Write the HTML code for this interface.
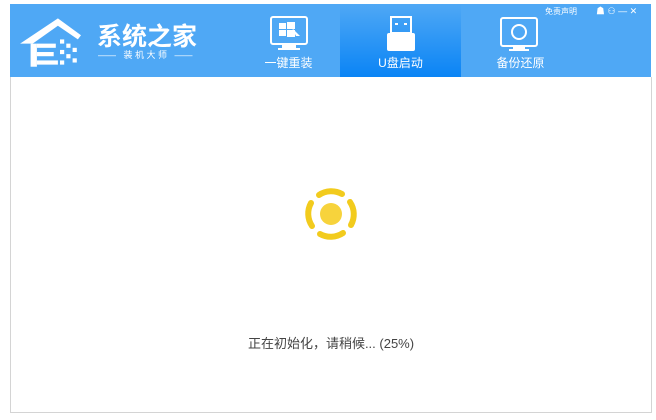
<!DOCTYPE html>
<html><head><meta charset="utf-8"><style>
body{margin:0;width:656px;height:420px;background:#fff;position:relative;overflow:hidden;font-family:"Liberation Sans","Noto Sans CJK SC",sans-serif}
.hdr{position:absolute;left:10px;top:4px;width:641px;height:73px;background:#4fa8f5}
.body{position:absolute;left:10px;top:77px;width:640px;height:335px;border:1px solid #d4d4d4;border-top:none;background:#fff}
.tab{position:absolute;top:0;height:73px;width:121px;color:#fff;font-size:12px;text-align:center}
.tab span{position:absolute;left:0;right:0;top:50px}
.act{background:linear-gradient(#4fa8f5,#0a84f5)}
.t{position:absolute;color:#fff}
</style></head><body>
<div class="hdr">
 <svg style="position:absolute;left:8px;top:8px" width="84" height="58" viewBox="0 0 80 55">
  <polygon points="2,30 38,6 60,22 57,26 38,13 14,30" fill="#fff"/>
  <rect x="12" y="30" width="6" height="22" fill="#fff"/>
  <rect x="18" y="30" width="18" height="4" fill="#fff"/><rect x="18" y="38" width="16" height="4" fill="#fff"/><rect x="18" y="46" width="20" height="4" fill="#fff"/>
  <rect x="40" y="26" width="4" height="4" fill="#fff"/><rect x="46" y="30" width="4" height="4" fill="#fff"/><rect x="40" y="36" width="4" height="4" fill="#fff"/><rect x="46" y="40" width="4" height="4" fill="#fff"/><rect x="52" y="34" width="4" height="4" fill="#fff"/><rect x="40" y="46" width="4" height="4" fill="#fff"/><rect x="52" y="44" width="4" height="4" fill="#fff"/>
 </svg>
 <div class="t" style="left:87px;top:13px;font-size:25px;font-weight:bold">系统之家</div>
 <div class="t" style="left:88px;top:44px;font-size:9px;white-space:nowrap">——&nbsp;&nbsp; 装 机 大 师 &nbsp;&nbsp;——</div>
 <div class="tab" style="left:218px">
  <svg style="position:absolute;left:42px;top:12px" width="38" height="36" viewBox="0 0 38 36"><rect x="1" y="1" width="36" height="27" rx="2" fill="none" stroke="#fff" stroke-width="2"/><rect x="12" y="28" width="14" height="4" fill="#fff"/><rect x="8" y="32" width="22" height="2" fill="#fff"/><rect x="9" y="7" width="7" height="6" fill="#fff"/><rect x="17" y="6" width="8" height="7" fill="#fff"/><rect x="9" y="14" width="7" height="6" fill="#fff"/><rect x="17" y="14" width="8" height="7" fill="#fff"/><path d="M22 12 L30 20 L26 20 Z" fill="#fff"/></svg>
  <span>一键重装</span></div>
 <div class="tab act" style="left:330px">
  <svg style="position:absolute;left:45px;top:12px" width="32" height="40" viewBox="0 0 32 40"><rect x="6" y="1" width="20" height="16" fill="none" stroke="#fff" stroke-width="2"/><rect x="10" y="7" width="3" height="2" fill="#fff"/><rect x="19" y="7" width="3" height="2" fill="#fff"/><rect x="2" y="17" width="28" height="18" rx="2" fill="#fff"/></svg>
  <span>U盘启动</span></div>
 <div class="tab" style="left:450px">
  <svg style="position:absolute;left:40px;top:13px" width="40" height="36" viewBox="0 0 40 36"><rect x="1" y="1" width="36" height="28" rx="2" fill="none" stroke="#fff" stroke-width="2"/><circle cx="19" cy="15" r="7" fill="none" stroke="#fff" stroke-width="2"/><rect x="13" y="29" width="12" height="3" fill="#fff"/><rect x="9" y="32" width="20" height="2" fill="#fff"/></svg>
  <span>备份还原</span></div>
 <div class="t" style="left:535px;top:2px;font-size:8px">免责声明</div>
 <div class="t" style="left:586px;top:0px;font-size:9px">☗ ⚇ — ✕</div>
</div>
<div class="body">
 <svg style="position:absolute;left:292px;top:109px" width="56" height="56" viewBox="0 0 56 56">
  <circle cx="28" cy="28" r="11" fill="#f7d33c"/>
  <g fill="none" stroke="#f2cb1d" stroke-width="6" stroke-linecap="round">
   <path d="M16 9 A22 22 0 0 1 39 8"/><path d="M47 16 A22 22 0 0 1 48 39"/><path d="M40 47 A22 22 0 0 1 17 48"/><path d="M9 40 A22 22 0 0 1 8 17"/>
  </g></svg>
 <div style="position:absolute;left:0;right:0;top:256px;text-align:center;font-size:13px;color:#444">正在初始化，请稍候... (25%)</div>
</div>
</body></html>
